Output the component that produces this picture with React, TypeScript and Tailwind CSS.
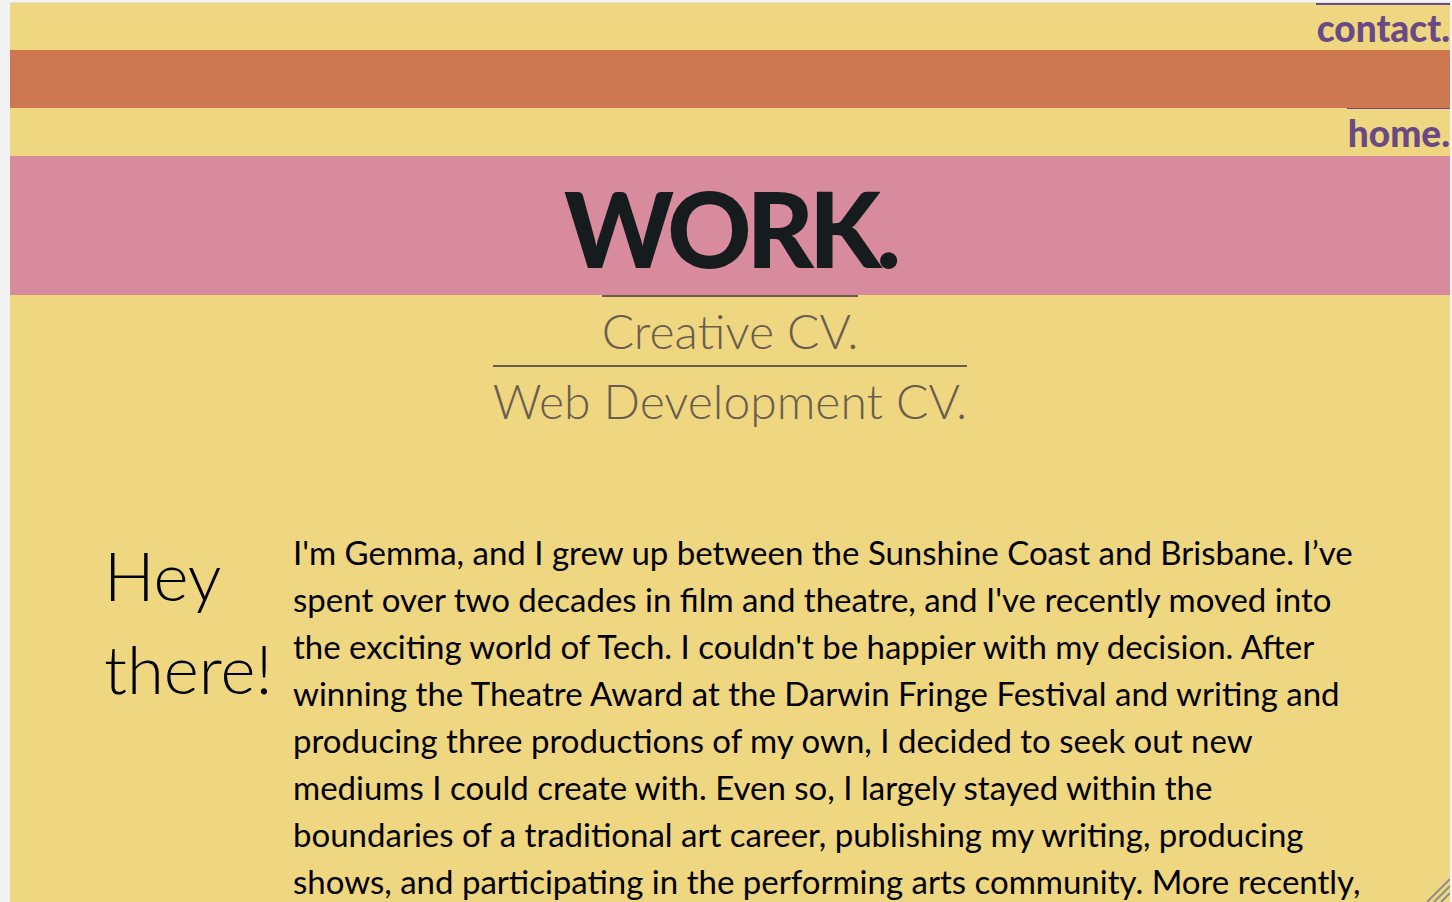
import React from "react";

const lines = [
  "I'm Gemma, and I grew up between the Sunshine Coast and Brisbane. I’ve",
  "spent over two decades in film and theatre, and I've recently moved into",
  "the exciting world of Tech. I couldn't be happier with my decision. After",
  "winning the Theatre Award at the Darwin Fringe Festival and writing and",
  "producing three productions of my own, I decided to seek out new",
  "mediums I could create with. Even so, I largely stayed within the",
  "boundaries of a traditional art career, publishing my writing, producing",
  "shows, and participating in the performing arts community. More recently,",
];

export default function App() {
  return (
    <div className="h-[902px] overflow-hidden bg-[#f3f3f3] pl-[10px] pr-[2px] pt-[2px] [font-family:Lato,'Open_Sans',sans-serif]">
      <div className="relative h-[900px] overflow-hidden bg-[#efd680] border-t border-[#e2e2e2]">
        {/* top nav row */}
        <div className="flex h-[47px] justify-end">
          <a className="border-t-2 border-[#6a4a84] pl-[1px] text-[37px] font-black leading-[46px] text-[#6a4a84]">
            contact.
          </a>
        </div>
        <div className="h-[58px] bg-[#cd7851]" />
        <div className="flex h-[48px] justify-end">
          <a className="border-t border-[#6a4a84] pl-[1px] text-[37px] font-black leading-[48px] text-[#6a4a84]">
            home.
          </a>
        </div>
        {/* work banner */}
        <div className="flex h-[139px] items-center justify-center bg-[#d78b9d]">
          <h1 className="mt-[4px] text-[104px] font-black leading-none tracking-[-5px] text-[#161b1e]">
            WORK.
          </h1>
        </div>
        {/* links */}
        <div className="flex flex-col items-center">
          <a className="border-t-2 border-[#6b5e4f] text-[48px] font-light leading-[68px] text-[#6b5e4f]">
            Creative CV.
          </a>
          <a className="border-t-2 border-[#6b5e4f] text-[48px] font-light leading-[68px] text-[#6b5e4f]">
            Web Development CV.
          </a>
        </div>
        {/* intro */}
        <div className="mt-[94px] flex pl-[94px]">
          <h2 className="w-[189px] shrink-0 text-[67px] font-light leading-[93px] text-black">
            Hey
            <br />
            there!
          </h2>
          <p className="text-[33px] leading-[47px] text-black">
            {lines.map((l, i) => (
              <span key={i} className="block whitespace-nowrap">
                {l}
              </span>
            ))}
          </p>
        </div>
        {/* resize grip */}
        <svg
          className="absolute bottom-0 right-0"
          width="26"
          height="26"
          viewBox="0 0 26 26"
        >
          <path d="M26 3 L3 26 M26 10 L10 26 M26 17 L17 26" stroke="#8f8f8f" strokeWidth="2" />
        </svg>
      </div>
    </div>
  );
}
